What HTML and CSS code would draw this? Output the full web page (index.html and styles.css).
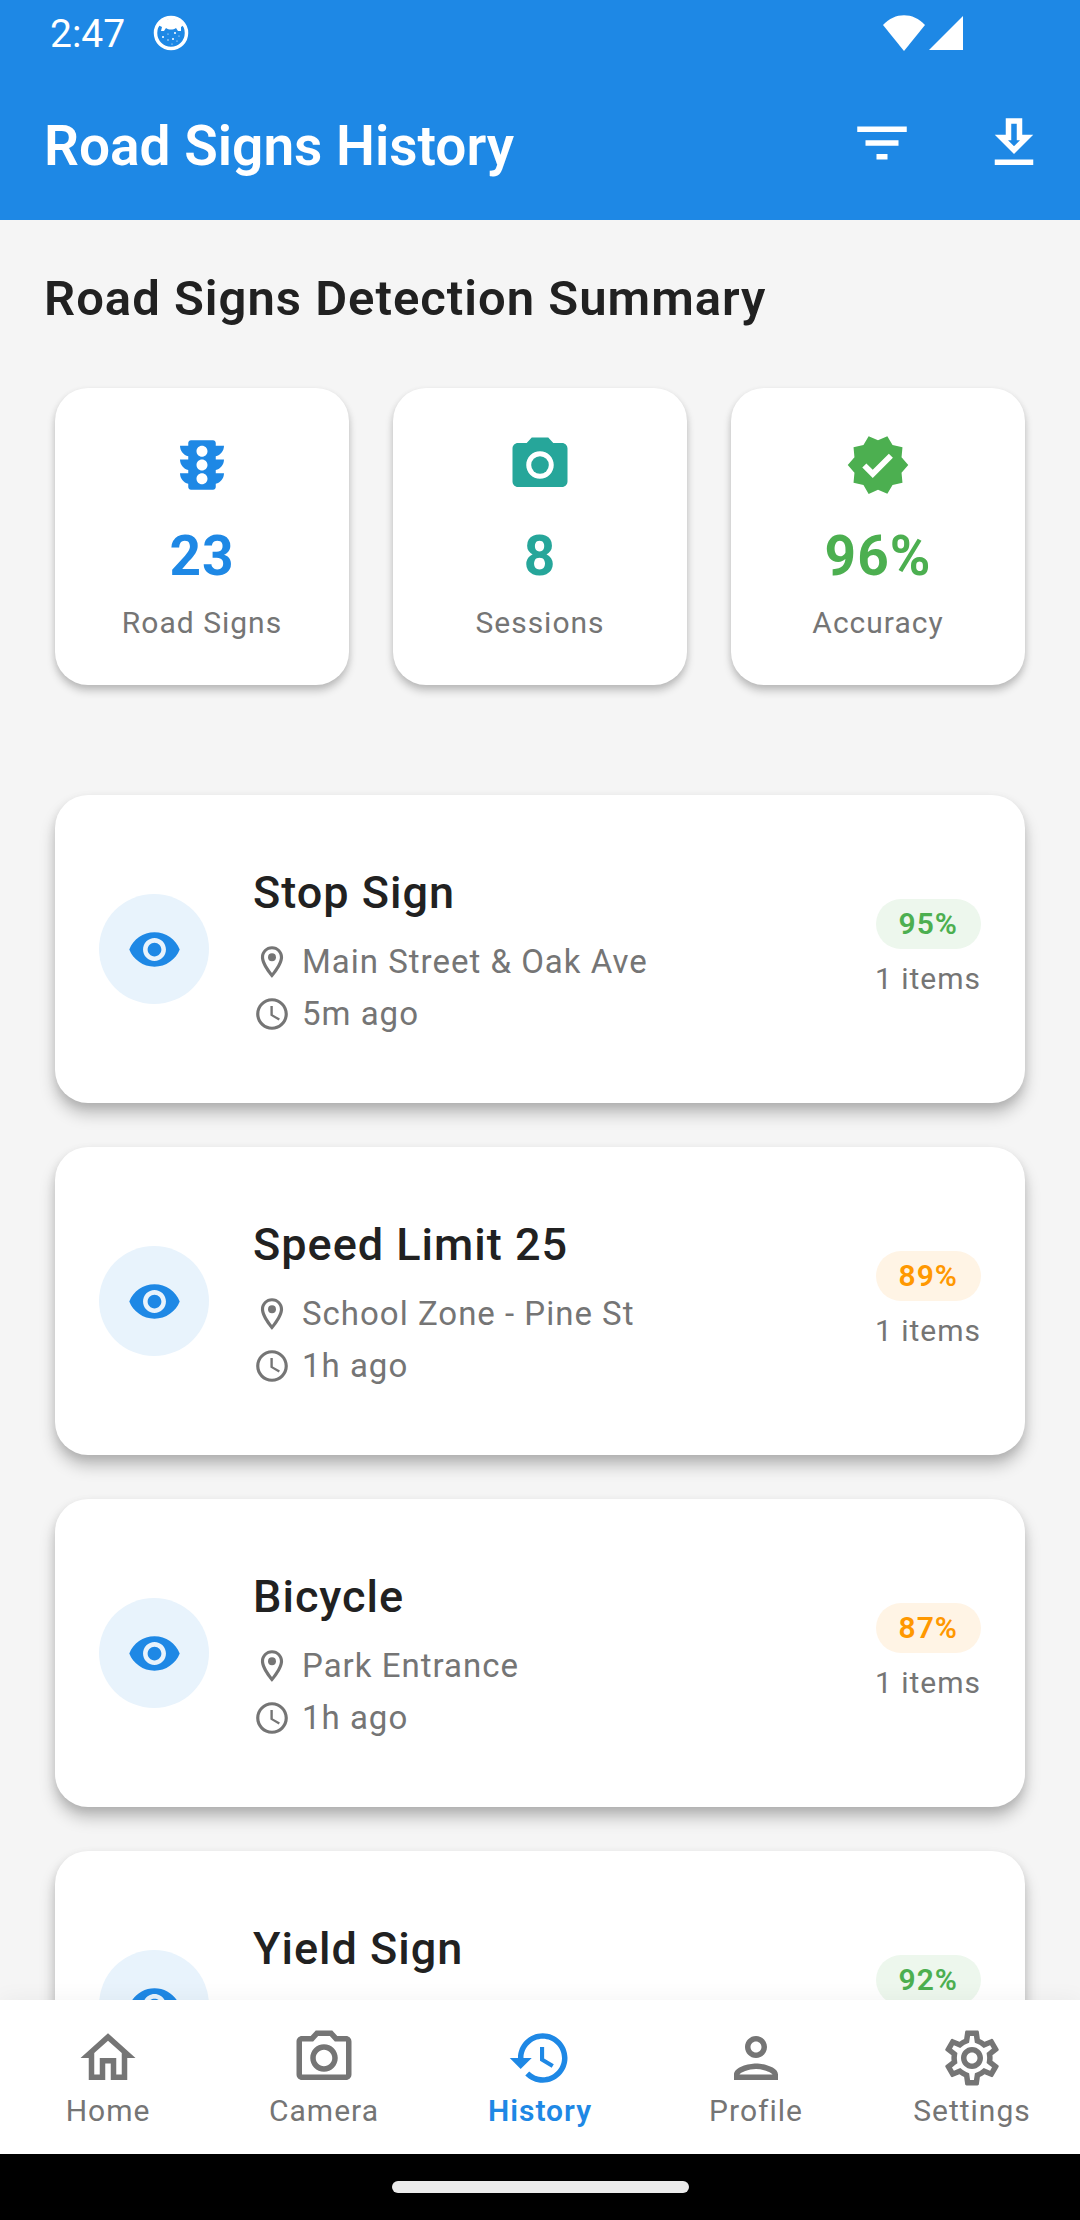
FILE: index.html
```html
<!DOCTYPE html>
<html lang="en">
<head>
<meta charset="utf-8">
<meta name="viewport" content="width=device-width, initial-scale=1">
<title>Road Signs History</title>
<link rel="stylesheet" href="styles.css">
</head>
<body>
<svg class="sprite" aria-hidden="true">
  <symbol id="eye" viewBox="0 0 24 24"><path d="M12 4.500C7 4.500 2.730 7.610 1 12c1.730 4.390 6 7.500 11 7.500s9.270-3.110 11-7.500c-1.730-4.390-6-7.500-11-7.500zM12 17c-2.760 0-5-2.240-5-5s2.240-5 5-5 5 2.240 5 5-2.240 5-5 5zm0-8c-1.660 0-3 1.340-3 3s1.340 3 3 3 3-1.340 3-3-1.340-3-3-3z"/></symbol>
  <symbol id="place" viewBox="0 0 24 24"><path d="M12 2C8.130 2 5 5.130 5 9c0 5.250 7 13 7 13s7-7.750 7-13c0-3.870-3.130-7-7-7zM7 9c0-2.760 2.240-5 5-5s5 2.240 5 5c0 2.880-2.880 7.190-5 9.880C9.920 16.210 7 11.850 7 9z"/><circle cx="12" cy="9" r="2.500"/></symbol>
  <symbol id="clock" viewBox="0 0 24 24"><path d="M11.990 2C6.470 2 2 6.480 2 12s4.470 10 9.990 10C17.520 22 22 17.520 22 12S17.520 2 11.990 2zM12 20c-4.420 0-8-3.580-8-8s3.580-8 8-8 8 3.580 8 8-3.580 8-8 8zm.5-13H11v6l5.250 3.150.75-1.230-4.500-2.670z"/></symbol>
</svg>

<header class="app-header">
  <div class="status-bar">
    <div class="status-group">
      <time class="status-time">2:47</time>
      <svg class="status-icon" viewBox="0 0 36 36" aria-hidden="true">
        <circle cx="18" cy="18" r="15.500" fill="none" stroke="currentColor" stroke-width="3.500"/>
        <path d="M5 10C8 2 28 2 31 10L28 12L28 16L25 16L23 13C20 15 16 15 13 13L11 16L8 16L9 12Z"/>
        <circle cx="10" cy="22" r="1"/><circle cx="15" cy="19" r=".6"/><circle cx="22" cy="18" r="1"/><circle cx="26" cy="21" r=".6"/><circle cx="20" cy="24" r="1"/><circle cx="15" cy="25" r=".7"/><circle cx="24" cy="26" r=".6"/><circle cx="19" cy="29" r=".6"/>
      </svg>
    </div>
    <div class="status-signals">
      <svg class="wifi" viewBox="0 0 42 36" aria-hidden="true"><path d="M0 10C12-3 30-3 42 10L21 36Z"/></svg>
      <svg class="cell" viewBox="0 0 34 34" aria-hidden="true"><path d="M34 0V34H0Z"/></svg>
    </div>
  </div>
  <div class="toolbar">
    <h1 class="toolbar-title">Road Signs History</h1>
    <button class="icon-button" type="button" aria-label="Filter">
      <svg class="icon" viewBox="0 0 24 24"><path d="M10 18h4v-2h-4v2zM3 6v2h18V6H3zm3 7h12v-2H6v2z"/></svg>
    </button>
    <button class="icon-button" type="button" aria-label="Download">
      <svg class="icon" viewBox="0 0 24 24"><path d="M19 9h-4V3H9v6H5l7 7 7-7zm-8 2V5h2v6h1.170L12 13.170 9.830 11H11zm-6 7h14v2H5z"/></svg>
    </button>
  </div>
</header>

<main class="content">
  <section class="summary">
    <h2 class="summary-title">Road Signs Detection Summary</h2>
    <div class="stats">
      <div class="stat stat-blue">
        <svg class="icon" viewBox="0 0 24 24" aria-hidden="true"><path d="M20 10h-3V8.860c1.720-.45 3-2 3-3.860h-3V4c0-.55-.45-1-1-1H8c-.55 0-1 .45-1 1v1H4c0 1.860 1.280 3.410 3 3.860V10H4c0 1.860 1.280 3.410 3 3.860V15H4c0 1.860 1.280 3.410 3 3.860V20c0 .55.45 1 1 1h8c.55 0 1-.45 1-1v-1.140c1.720-.45 3-2 3-3.860h-3v-1.140c1.720-.45 3-2 3-3.860zm-8 9c-1.110 0-2-.9-2-2s.89-2 2-2c1.100 0 2 .9 2 2s-.89 2-2 2zm0-5c-1.110 0-2-.9-2-2s.89-2 2-2c1.100 0 2 .9 2 2s-.89 2-2 2zm0-5c-1.110 0-2-.9-2-2 0-1.110.89-2 2-2 1.100 0 2 .89 2 2 0 1.100-.89 2-2 2z"/></svg>
        <strong class="stat-value">23</strong>
        <span class="stat-label">Road Signs</span>
      </div>
      <div class="stat stat-teal">
        <svg class="icon" viewBox="0 0 24 24" aria-hidden="true"><circle cx="12" cy="12" r="3.200"/><path d="M9 2L7.170 4H4c-1.100 0-2 .9-2 2v12c0 1.100.9 2 2 2h16c1.100 0 2-.9 2-2V6c0-1.100-.9-2-2-2h-3.170L15 2H9zm3 15c-2.760 0-5-2.240-5-5s2.240-5 5-5 5 2.240 5 5-2.240 5-5 5z"/></svg>
        <strong class="stat-value">8</strong>
        <span class="stat-label">Sessions</span>
      </div>
      <div class="stat stat-green">
        <svg class="icon" viewBox="0 0 24 24" aria-hidden="true"><path d="M23 12l-2.440-2.790.34-3.690-3.610-.82-1.890-3.200L12 2.960 8.600 1.500 6.710 4.690 3.100 5.500l.34 3.700L1 12l2.440 2.790-.34 3.700 3.610.82L8.600 22.500l3.400-1.470 3.400 1.460 1.890-3.190 3.610-.82-.34-3.690L23 12zm-12.910 4.720l-3.800-3.810 1.480-1.480 2.320 2.330 5.850-5.870 1.480 1.480-7.330 7.350z"/></svg>
        <strong class="stat-value">96%</strong>
        <span class="stat-label">Accuracy</span>
      </div>
    </div>
  </section>

  <ul class="detections">
    <li class="detection">
      <span class="avatar"><svg class="avatar-icon" aria-hidden="true"><use href="#eye"/></svg></span>
      <div class="detection-body">
        <h3 class="detection-title">Stop Sign</h3>
        <p class="meta"><svg class="meta-icon" aria-hidden="true"><use href="#place"/></svg>Main Street &amp; Oak Ave</p>
        <p class="meta"><svg class="meta-icon" aria-hidden="true"><use href="#clock"/></svg>5m ago</p>
      </div>
      <div class="detection-side"><span class="badge badge-green">95%</span><span class="count">1 items</span></div>
    </li>
    <li class="detection">
      <span class="avatar"><svg class="avatar-icon" aria-hidden="true"><use href="#eye"/></svg></span>
      <div class="detection-body">
        <h3 class="detection-title">Speed Limit 25</h3>
        <p class="meta"><svg class="meta-icon" aria-hidden="true"><use href="#place"/></svg>School Zone - Pine St</p>
        <p class="meta"><svg class="meta-icon" aria-hidden="true"><use href="#clock"/></svg>1h ago</p>
      </div>
      <div class="detection-side"><span class="badge badge-orange">89%</span><span class="count">1 items</span></div>
    </li>
    <li class="detection">
      <span class="avatar"><svg class="avatar-icon" aria-hidden="true"><use href="#eye"/></svg></span>
      <div class="detection-body">
        <h3 class="detection-title">Bicycle</h3>
        <p class="meta"><svg class="meta-icon" aria-hidden="true"><use href="#place"/></svg>Park Entrance</p>
        <p class="meta"><svg class="meta-icon" aria-hidden="true"><use href="#clock"/></svg>1h ago</p>
      </div>
      <div class="detection-side"><span class="badge badge-orange">87%</span><span class="count">1 items</span></div>
    </li>
    <li class="detection">
      <span class="avatar"><svg class="avatar-icon" aria-hidden="true"><use href="#eye"/></svg></span>
      <div class="detection-body">
        <h3 class="detection-title">Yield Sign</h3>
        <p class="meta"><svg class="meta-icon" aria-hidden="true"><use href="#place"/></svg></p>
        <p class="meta"><svg class="meta-icon" aria-hidden="true"><use href="#clock"/></svg></p>
      </div>
      <div class="detection-side"><span class="badge badge-green">92%</span><span class="count"></span></div>
    </li>
  </ul>
</main>

<nav class="tabs" aria-label="Main">
  <a class="tab" href="#home">
    <svg class="icon" viewBox="0 0 24 24" aria-hidden="true"><path d="M12 5.690l5 4.500V18h-2v-6H9v6H7v-7.810l5-4.500M12 3L2 12h3v8h6v-6h2v6h6v-8h3L12 3z"/></svg>Home</a>
  <a class="tab" href="#camera">
    <svg class="icon" viewBox="0 0 24 24" aria-hidden="true"><path d="M14.120 4l1.830 2H20v12H4V6h4.050l1.830-2h4.240M15 2H9L7.170 4H4c-1.100 0-2 .9-2 2v12c0 1.100.9 2 2 2h16c1.100 0 2-.9 2-2V6c0-1.100-.9-2-2-2h-3.170L15 2zm-3 7c1.650 0 3 1.350 3 3s-1.350 3-3 3-3-1.350-3-3 1.350-3 3-3m0-2c-2.760 0-5 2.240-5 5s2.240 5 5 5 5-2.240 5-5-2.240-5-5-5z"/></svg>Camera</a>
  <a class="tab tab-active" href="#history" aria-current="page">
    <svg class="icon" viewBox="0 0 24 24" aria-hidden="true"><path d="M13 3c-4.970 0-9 4.030-9 9H1l3.890 3.890.07.14L9 12H6c0-3.870 3.130-7 7-7s7 3.130 7 7-3.130 7-7 7c-1.930 0-3.680-.79-4.940-2.060l-1.420 1.420C8.270 19.990 10.510 21 13 21c4.970 0 9-4.030 9-9s-4.030-9-9-9zm-1 5v5l4.250 2.520.77-1.280-3.520-2.090V8z"/></svg>History</a>
  <a class="tab" href="#profile">
    <svg class="icon" viewBox="0 0 24 24" aria-hidden="true"><path d="M12 6c1.100 0 2 .9 2 2s-.9 2-2 2-2-.9-2-2 .9-2 2-2m0 10c2.700 0 5.800 1.290 6 2H6c.23-.72 3.310-2 6-2m0-12C9.790 4 8 5.790 8 8s1.790 4 4 4 4-1.790 4-4-1.790-4-4-4zm0 10c-2.670 0-8 1.340-8 4v2h16v-2c0-2.660-5.330-4-8-4z"/></svg>Profile</a>
  <a class="tab" href="#settings">
    <svg class="icon" viewBox="0 0 24 24" aria-hidden="true"><path d="M19.430 12.980c.04-.32.07-.64.07-.98 0-.34-.03-.66-.07-.98l2.110-1.650c.19-.15.24-.42.12-.64l-2-3.460c-.09-.16-.26-.25-.44-.25-.06 0-.12.01-.17.03l-2.490 1c-.52-.4-1.080-.73-1.690-.98l-.38-2.650C14.460 2.180 14.250 2 14 2h-4c-.25 0-.46.18-.49.42l-.38 2.650c-.61.25-1.170.59-1.690.98l-2.490-1c-.06-.02-.12-.03-.18-.03-.17 0-.34.09-.43.25l-2 3.460c-.13.22-.07.49.12.64l2.110 1.650c-.04.32-.07.65-.07.98 0 .33.03.66.07.98l-2.110 1.650c-.19.15-.24.42-.12.64l2 3.460c.09.16.26.25.44.25.06 0 .12-.01.17-.03l2.490-1c.52.4 1.080.73 1.690.98l.38 2.650c.03.24.24.42.49.42h4c.25 0 .46-.18.49-.42l.38-2.650c.61-.25 1.170-.59 1.690-.98l2.490 1c.06.02.12.03.18.03.17 0 .34-.09.43-.25l2-3.460c.12-.22.07-.49-.12-.64l-2.110-1.650zm-1.980-1.710c.04.31.05.52.05.73 0 .21-.02.43-.05.73l-.14 1.130.89.700 1.080.84-.7 1.210-1.270-.51-1.040-.42-.9.68c-.43.32-.84.56-1.250.73l-1.060.43-.16 1.130-.2 1.350h-1.400l-.19-1.350-.16-1.130-1.060-.43c-.43-.18-.83-.41-1.230-.71l-.91-.7-1.060.43-1.270.51-.7-1.210 1.080-.84.89-.7-.14-1.130c-.03-.31-.05-.54-.05-.74s.02-.43.05-.73l.14-1.130-.89-.7-1.080-.84.7-1.210 1.270.51 1.040.42.9-.68c.43-.32.84-.56 1.250-.73l1.060-.43.16-1.130.2-1.350h1.390l.19 1.350.16 1.130 1.060.43c.43.18.83.41 1.230.71l.91.7 1.060-.43 1.270-.51.7 1.210-1.070.85-.89.7.14 1.130zM12 8c-2.210 0-4 1.790-4 4s1.790 4 4 4 4-1.790 4-4-1.790-4-4-4zm0 6c-1.100 0-2-.9-2-2s.9-2 2-2 2 .9 2 2-.9 2-2 2z"/></svg>Settings</a>
</nav>
<div class="gesture-area"><span class="gesture-bar"></span></div>
</body>
</html>
```
FILE: styles.css
```css
* { box-sizing: border-box; }

body {
  margin: 0;
  height: 100vh;
  display: flex;
  flex-direction: column;
  background: #f5f5f5;
  color: #212121;
  font-family: Roboto, "Liberation Sans", sans-serif;
}

h1, h2, h3, p, ul { margin: 0; padding: 0; }
svg { display: block; flex: none; fill: currentColor; }
.sprite { position: absolute; width: 0; height: 0; }
.icon { width: 66px; height: 66px; }

/* Header */
.app-header { background: #1e88e5; color: #fff; }
.status-bar {
  height: 66px;
  padding: 0 117px 0 50px;
  display: flex;
  align-items: center;
  justify-content: space-between;
}
.status-group { display: flex; align-items: center; gap: 28px; }
.status-time { padding-top: 2px; font-size: 39px; line-height: 66px; }
.status-icon { width: 36px; height: 36px; }
.status-signals { display: flex; align-items: center; gap: 4px; }
.wifi { width: 42px; height: 36px; }
.cell { width: 34px; height: 34px; }
.toolbar { height: 154px; padding-left: 44px; display: flex; align-items: center; }
.toolbar-title { flex: 1; padding-top: 6px; font-size: 55px; line-height: 66px; font-weight: 600; }
.icon-button {
  width: 132px;
  height: 132px;
  padding: 0;
  border: 0;
  background: none;
  color: inherit;
  display: grid;
  place-items: center;
}

/* Scrolling content */
.content { flex: 1; min-height: 0; overflow-y: auto; scrollbar-width: none; }
.summary { padding: 46px 44px 0; }
.summary-title { font-size: 49px; line-height: 66px; font-weight: 600; letter-spacing: 1px; }
.stats {
  display: grid;
  grid-template-columns: repeat(3, 1fr);
  gap: 44px;
  margin-top: 56px;
  padding: 0 11px;
}
.stat {
  display: flex;
  flex-direction: column;
  align-items: center;
  padding: 44px 0 39px;
  background: #fff;
  border-radius: 33px;
  box-shadow: 0 6px 9px rgba(0, 0, 0, .2), 0 2px 6px rgba(0, 0, 0, .08);
}
.stat-blue { color: #1e88e5; }
.stat-teal { color: #26a69a; }
.stat-green { color: #4caf50; }
.stat-value { margin: 22px 0 8px; font-size: 55px; line-height: 72px; font-weight: 700; letter-spacing: 1px; }
.stat-label { color: #757575; font-size: 30px; line-height: 46px; letter-spacing: 1px; }

.detections {
  list-style: none;
  margin-top: 110px;
  padding: 0 55px 44px;
  display: flex;
  flex-direction: column;
  gap: 44px;
}
.detection {
  min-height: 308px;
  padding: 44px;
  display: flex;
  align-items: center;
  gap: 44px;
  background: #fff;
  border-radius: 33px;
  box-shadow: 0 11px 16px rgba(0, 0, 0, .22), 0 4px 10px rgba(0, 0, 0, .1);
}
.avatar {
  width: 110px;
  height: 110px;
  flex: none;
  border-radius: 50%;
  display: grid;
  place-items: center;
  background: #e8f3fc;
  color: #1e88e5;
}
.avatar-icon { width: 55px; height: 55px; }
.detection-body { flex: 1; }
.detection-title { margin-bottom: 17px; font-size: 45px; line-height: 60px; font-weight: 500; letter-spacing: 1px; }
.meta {
  min-height: 44px;
  display: flex;
  align-items: center;
  gap: 11px;
  color: #757575;
  font-size: 33px;
  line-height: 44px;
  letter-spacing: 1px;
}
.meta + .meta { margin-top: 8px; }
.meta-icon { width: 38px; height: 38px; }
.detection-side { display: flex; flex-direction: column; align-items: flex-end; gap: 10px; }
.badge {
  padding: 0 23px;
  border-radius: 25px;
  font-size: 30px;
  line-height: 50px;
  font-weight: 600;
  letter-spacing: 1px;
}
.badge-green { background: #edf7ed; color: #4caf50; }
.badge-orange { background: #fff4e5; color: #ff9800; }
.count { min-height: 40px; color: #757575; font-size: 30px; line-height: 40px; letter-spacing: 1px; }

/* Bottom navigation */
.tabs {
  height: 154px;
  padding-top: 25px;
  display: flex;
  background: #fff;
  box-shadow: 0 0 22px rgba(0, 0, 0, .05);
  position: relative;
}
.tab {
  flex: 1;
  display: flex;
  flex-direction: column;
  align-items: center;
  color: #757575;
  font-size: 30px;
  line-height: 40px;
  letter-spacing: 1px;
  text-decoration: none;
}
.tab-active { color: #1e88e5; font-weight: 600; }

.gesture-area { height: 66px; display: grid; place-items: center; background: #000; position: relative; }
.gesture-bar { width: 297px; height: 12px; border-radius: 6px; background: #ebebeb; }
```
